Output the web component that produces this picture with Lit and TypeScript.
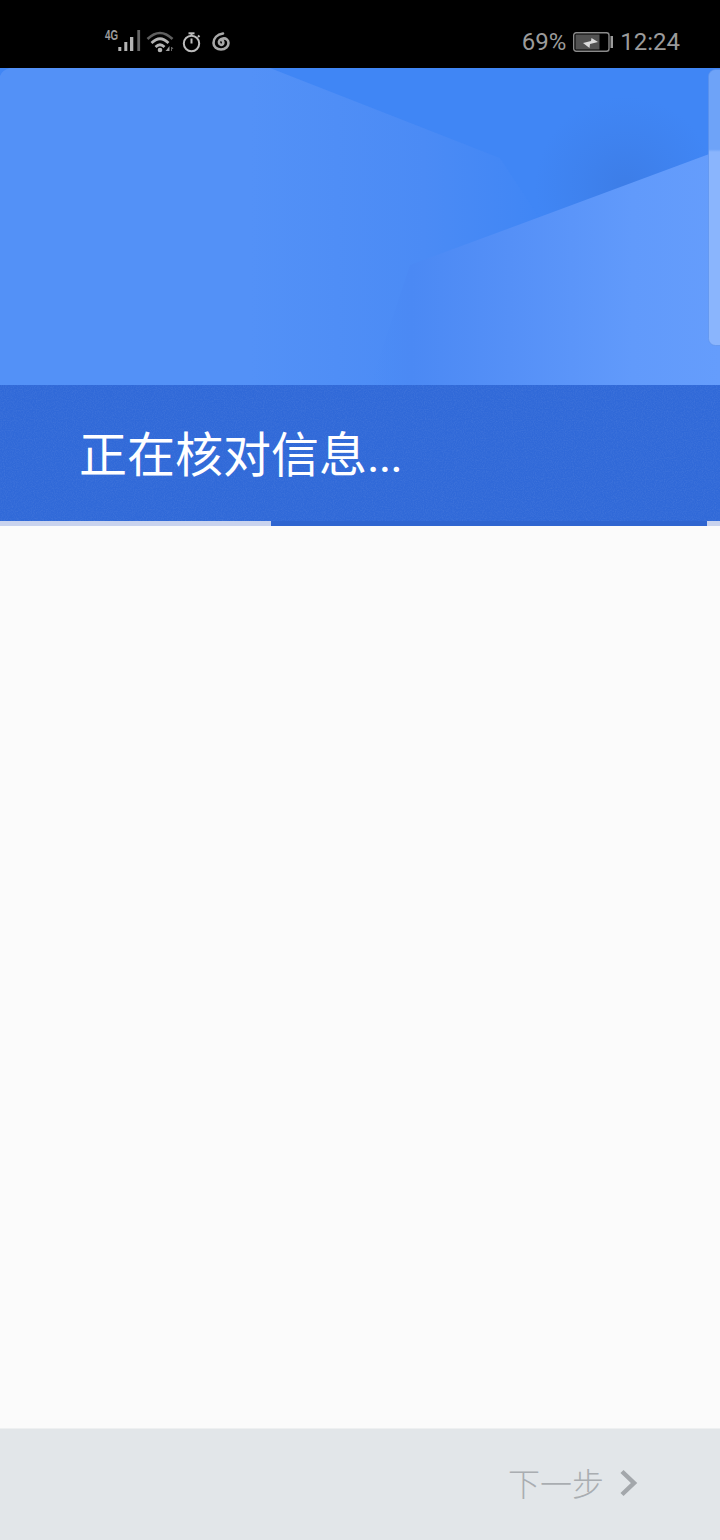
import { LitElement, html, css, svg } from "lit";
import { customElement } from "lit/decorators.js";

@customElement("app-root")
export class AppRoot extends LitElement {
  static styles = css`
    :host {
      display: flex;
      flex-direction: column;
      width: 720px;
      height: 1540px;
      overflow: hidden;
      background: #fbfbfb;
      font-family: "Noto Sans CJK SC", "Noto Sans", sans-serif;
    }
    .status {
      height: 68px;
      flex: none;
      background: #000;
      display: flex;
      align-items: center;
      justify-content: space-between;
      padding: 16px 40px 0 104px;
      box-sizing: border-box;
      color: #9b9b9b;
      font-family: Roboto, "Liberation Sans", sans-serif;
      font-size: 24px;
    }
    .right { display: flex; align-items: center; gap: 7px; }
    .status svg { display: block; }
    .hero {
      position: relative;
      height: 317px;
      flex: none;
      overflow: hidden;
      background: #5391f7;
    }
    .hero svg { position: absolute; inset: 0; display: block; }
    .band {
      position: relative;
      height: 136px;
      flex: none;
      box-sizing: border-box;
      padding: 32px 0 0 79px;
      background: #3069d8;
      color: #fff;
      font-size: 48px;
      line-height: 68px;
      font-weight: 400;
      white-space: nowrap;
      overflow: hidden;
    }
    .band svg { position: absolute; inset: 0; }
    .band span { position: relative; }
    .band .dots { font-family: Roboto, sans-serif; letter-spacing: -1px; }
    .progress {
      height: 5px;
      flex: none;
      display: flex;
      background: #c9d3ee;
    }
    .progress .bar {
      margin-left: 271px;
      width: 436px;
      background: #2f65d0;
    }
    .content { flex: 1; background: #fbfbfb; }
    .footer {
      height: 112px;
      flex: none;
      background: #e2e6e9;
      display: flex;
      align-items: center;
      justify-content: flex-end;
      padding: 0 81px 6px 0;
      color: #a9adb1;
      font-size: 32px;
      font-weight: 300;
      gap: 15px;
      border-top: 1px solid #eef0f1;
      box-sizing: border-box;
    }
    .footer svg { display: block; margin-top: 2px; }
  `;

  private indicators() {
    return html`<svg width="130" height="32" viewBox="0 0 130 32">
      <text x="1" y="14" font-family="'Liberation Sans', sans-serif" font-size="15" font-weight="700" fill="#9b9b9b" textLength="13" lengthAdjust="spacingAndGlyphs">4G</text>
      <rect x="14.3" y="21" width="3" height="4" fill="#b4b4b4"/>
      <rect x="20.3" y="16" width="3" height="9" fill="#b4b4b4"/>
      <rect x="26" y="11" width="3.3" height="14" fill="#b4b4b4"/>
      <rect x="33.3" y="4" width="2.8" height="21" fill="#666"/>
      <g fill="none" stroke-width="2.6">
        <path d="M43.5 13 Q56 1 68.5 13" stroke="#5f5f5f"/>
        <path d="M47.5 17 Q56 8.5 64.5 17" stroke="#b4b4b4"/>
        <path d="M51.5 21 Q56 16.5 60.5 21" stroke="#b4b4b4"/>
      </g>
      <circle cx="56" cy="24" r="2.3" fill="#b4b4b4"/>
      <path d="M62.5 24 l3 -4 v5 h-4z" fill="#a0a0a0"/>
      <path d="M67.5 25 v-4 l1.5 2" fill="none" stroke="#666" stroke-width="1"/>
      <g fill="none" stroke="#bcbcbc" stroke-width="2">
        <circle cx="87.5" cy="17.5" r="7.7"/>
        <path d="M87.5 17.5 V12.5"/>
        <path d="M84.5 7.3 H90.5"/>
        <path d="M87.5 7.3 V10"/>
        <path d="M94 9.5 L95.5 11"/>
      </g>
      <g transform="translate(108,6)">
        <path d="M11 1.5 C5 2.5 1.5 6.5 1.5 11 C1.5 15 5 17.5 9 17.5 C13.5 17.5 16.5 14.5 16.5 11 C16.5 8 14 6 11 6.5 C8 7 6.5 9 7 11 C7.5 13 10 13.5 11 12 C11.8 10.5 11 9 10 8"
          fill="none" stroke="#a8a8a8" stroke-width="2.6" stroke-linecap="round"/>
      </g>
    </svg>`;
  }

  private battery() {
    return html`<svg width="40" height="20" viewBox="0 0 40 20">
      <rect x="0.7" y="0.7" width="35.3" height="18.6" rx="2.5" fill="none" stroke="#8a8a8a" stroke-width="1.4"/>
      <rect x="2.5" y="2.5" width="24" height="15" fill="#525252"/>
      <rect x="37.5" y="4" width="2.5" height="12" fill="#9b9b9b"/>
      <path d="M10 11 L18 9 L18.5 6 L25 10 L17 12 L16.5 16 Z" fill="#dcdcdc"/>
    </svg>`;
  }

  private heroArt() {
    return svg`
      <defs>
        <linearGradient id="mid" x1="250" y1="0" x2="540" y2="0" gradientUnits="userSpaceOnUse">
          <stop offset="0" stop-color="#5391f7"/>
          <stop offset="0.6" stop-color="#4b8bf5"/>
          <stop offset="1" stop-color="#4086f5"/>
        </linearGradient>
        <linearGradient id="base" x1="0" y1="60" x2="0" y2="200" gradientUnits="userSpaceOnUse">
          <stop offset="0" stop-color="#5391f7" stop-opacity="0"/>
          <stop offset="1" stop-color="#5391f7" stop-opacity="0.35"/>
        </linearGradient>
        <linearGradient id="lower" x1="370" y1="0" x2="720" y2="0" gradientUnits="userSpaceOnUse">
          <stop offset="0" stop-color="#4b8bf5" stop-opacity="0"/>
          <stop offset="0.12" stop-color="#4b89f4"/>
          <stop offset="0.4" stop-color="#5590f7"/>
          <stop offset="0.75" stop-color="#619afb"/>
          <stop offset="1" stop-color="#659dfc"/>
        </linearGradient>
        <radialGradient id="shade" cx="625" cy="118" r="90" gradientUnits="userSpaceOnUse">
          <stop offset="0" stop-color="#3a76dc" stop-opacity="0.55"/>
          <stop offset="0.5" stop-color="#3a76dc" stop-opacity="0.25"/>
          <stop offset="1" stop-color="#3a76dc" stop-opacity="0"/>
        </radialGradient>
        <linearGradient id="pane" x1="0" y1="0" x2="0" y2="280" gradientUnits="userSpaceOnUse">
          <stop offset="0" stop-color="#6ea3f8"/>
          <stop offset="0.29" stop-color="#6ea3f8"/>
          <stop offset="0.3" stop-color="#8ab5fd"/>
          <stop offset="1" stop-color="#8ab5fd"/>
        </linearGradient>
      </defs>
      <rect width="720" height="317" fill="url(#mid)"/>
      <path d="M270 0 H720 V82 L540 150 L500 90 Z" fill="#4086f5"/>
      <rect x="520" y="0" width="200" height="220" fill="url(#shade)"/>
      <path d="M720 82 L410 197 L370 317 H720 Z" fill="url(#lower)"/>
      <path d="M0 8 Q2 2 10 0 H0 Z" fill="#4086f5"/>
      <rect x="708.5" y="1.5" width="20" height="276" rx="7" fill="url(#pane)" stroke="#5a8fe8" stroke-opacity="0.6"/>
    `;
  }

  render() {
    return html`
      <div class="status">
        ${this.indicators()}
        <div class="right">
          <span>69%</span>${this.battery()}<span>12:24</span>
        </div>
      </div>
      <div class="hero">
        <svg width="720" height="317" viewBox="0 0 720 317">${this.heroArt()}</svg>
      </div>
      <div class="band">
        <svg width="720" height="136">
          <filter id="grain"><feTurbulence type="fractalNoise" baseFrequency="0.9" numOctaves="2"/><feColorMatrix values="0 0 0 0 1  0 0 0 0 1  0 0 0 0 1  0 0 0 0.5 -0.18"/></filter>
          <rect width="720" height="136" filter="url(#grain)" opacity="0.25"/>
        </svg>
        <span>正在核对信息<span class="dots">...</span></span>
      </div>
      <div class="progress"><div class="bar"></div></div>
      <div class="content"></div>
      <div class="footer">
        <span>下一步</span>
        <svg width="20" height="28" viewBox="0 0 20 28">
          <path d="M3 2.5 L15 14 L3 25.5" fill="none" stroke="#a3a7ab" stroke-width="4.5"/>
        </svg>
      </div>
    `;
  }
}
